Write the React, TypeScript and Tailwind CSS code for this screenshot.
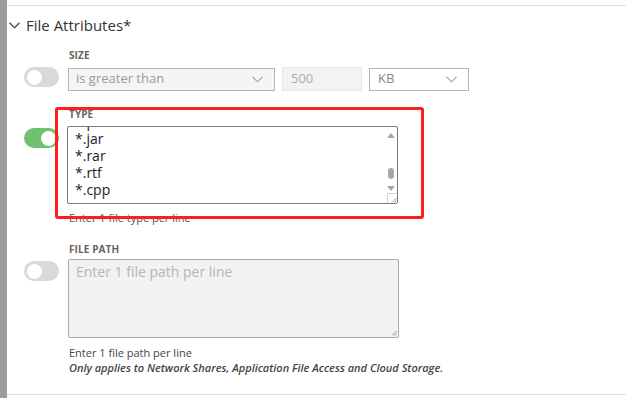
import React from 'react';

function Toggle({ on }: { on?: boolean }) {
  return (
    <div
      className={`w-[35px] h-[20px] rounded-full flex items-center px-[3px] shrink-0 ${
        on ? 'bg-[#6fc06f] justify-end' : 'bg-[#d9d9d9] justify-start'
      }`}
    >
      <div className="w-[15px] h-[15px] rounded-full bg-white" />
    </div>
  );
}

function Chevron({ className = '', color = '#a0a0a0', width = 1.1 }: { className?: string; color?: string; width?: number }) {
  return (
    <svg width="11" height="7" viewBox="0 0 11 7" className={className}>
      <path d="M0.5 0.8 L5.5 5.8 L10.5 0.8" fill="none" stroke={color} strokeWidth={width} />
    </svg>
  );
}

function ResizeGrip({ boxed }: { boxed?: boolean }) {
  return (
    <div
      className={`absolute right-0 bottom-0 w-[10px] h-[10px] ${
        boxed ? 'border-l border-t border-[#d4d4d4] bg-white' : ''
      }`}
    >
      <svg width="10" height="10" viewBox="0 0 10 10" className="absolute inset-0">
        <path d="M8.5 4 L4 8.5 M8.5 6.5 L6.5 8.5" stroke="#8a8a8a" strokeWidth="0.9" />
      </svg>
    </div>
  );
}

function Label({ children }: { children: React.ReactNode }) {
  return (
    <div className="pl-[45px] text-[10px] leading-[14px] font-bold text-[#67625d] tracking-[0.1px]">
      {children}
    </div>
  );
}

export default function App() {
  // first entry is scrolled mostly out of view
  const types = ['*.pdf', '*.jar', '*.rar', '*.rtf', '*.cpp'];

  return (
    <div
      className="w-[626px] h-[398px] bg-white flex overflow-hidden"
      style={{ fontFamily: '"Open Sans", "Liberation Sans", sans-serif' }}
    >
      {/* left strip */}
      <div className="w-[7px] bg-[#9c9c9c] shrink-0" />

      <div className="flex-1 flex flex-col">
        <div className="mt-[5px] border-t border-[#dedede] h-[390px] border-b flex flex-col relative">
          {/* header */}
          <div className="flex items-center pl-[2px] pt-[6px] h-[31px]">
            <Chevron className="mr-[6px] mt-[2px]" color="#555" width={1.5} />
            <span className="text-[15px] leading-[22px] text-[#333]">File Attributes*</span>
          </div>

          <div className="pl-[17px] flex flex-col">
            {/* SIZE */}
            <div className="mt-[11px]">
              <Label>SIZE</Label>
              <div className="flex items-start gap-[9px] mt-[5px]">
                <Toggle />
                <div className="flex items-center gap-[7px]">
                  <div className="w-[207px] h-[23px] border border-[#b5b5b5] bg-[#f5f5f5] flex items-center justify-between pl-[7px] pr-[11px]">
                    <span className="text-[13px] text-[#9a9a9a]">is greater than</span>
                    <Chevron />
                  </div>
                  <div className="w-[80px] h-[24px] border border-[#e6e6e6] bg-[#f3f3f3] flex items-center pl-[8px]">
                    <span className="text-[13px] text-[#aaa]">500</span>
                  </div>
                  <div className="w-[100px] h-[23px] border border-[#b5b5b5] bg-white flex items-center justify-between pl-[8px] pr-[11px]">
                    <span className="text-[13px] text-[#888]">KB</span>
                    <Chevron />
                  </div>
                </div>
              </div>
            </div>

            {/* TYPE */}
            <div className="mt-[16px]">
              <Label>TYPE</Label>
              <div className="flex items-start gap-[8px] mt-[5px]">
                <div className="mt-[2px]">
                  <Toggle on />
                </div>
                <div className="flex flex-col">
                  <div className="w-[331px] h-[78px] border border-[#7a7a7a] rounded-[2px] bg-white relative overflow-hidden">
                    <div className="absolute left-[7px] top-[-14px] text-[14px] leading-[17px] text-[#222]">
                      {types.map((t) => (
                        <div key={t}>{t}</div>
                      ))}
                    </div>
                    {/* scrollbar */}
                    <div className="absolute right-[1px] top-0 bottom-[10px] w-[10px] bg-white flex flex-col items-center">
                      <svg width="8" height="5" viewBox="0 0 8 5" className="mt-[6px]">
                        <path d="M0 5 L4 0 L8 5 Z" fill="#a8a8a8" />
                      </svg>
                      <div className="w-[6px] h-[11px] rounded-full bg-[#a8a8a8] mt-[30px]" />
                      <svg width="8" height="5" viewBox="0 0 8 5" className="mt-[7px]">
                        <path d="M0 0 L4 5 L8 0 Z" fill="#a8a8a8" />
                      </svg>
                    </div>
                    <ResizeGrip boxed />
                  </div>
                  <div className="pl-[2px] mt-[6px] text-[11px] leading-[15px] text-[#555]">
                    Enter 1 file type per line
                  </div>
                </div>
              </div>
            </div>

            {/* FILE PATH */}
            <div className="mt-[17px]">
              <Label>FILE PATH</Label>
              <div className="flex items-start gap-[9px] mt-[3px]">
                <div className="mt-[2px]">
                  <Toggle />
                </div>
                <div className="flex flex-col">
                  <div className="w-[331px] h-[79px] border border-[#aaa] rounded-[2px] bg-[#f2f2f2] relative">
                    <div className="pl-[7px] pt-[2px] text-[14px] leading-[20px] text-[#b5b5b5]">
                      Enter 1 file path per line
                    </div>
                    <ResizeGrip />
                  </div>
                  <div className="pl-[1px] mt-[7px] text-[11px] leading-[15px] text-[#444]">
                    Enter 1 file path per line
                  </div>
                  <div className="pl-[1px] mt-0 text-[11px] leading-[15px] text-[#444] italic font-semibold">
                    Only applies to Network Shares, Application File Access and Cloud Storage.
                  </div>
                </div>
              </div>
            </div>
          </div>

          {/* annotation highlight */}
          <div className="absolute left-[48px] top-[101px] w-[369px] h-[112px] border-[3px] border-[#ff1e1e] rounded-[3px] pointer-events-none" />
        </div>
      </div>
    </div>
  );
}
